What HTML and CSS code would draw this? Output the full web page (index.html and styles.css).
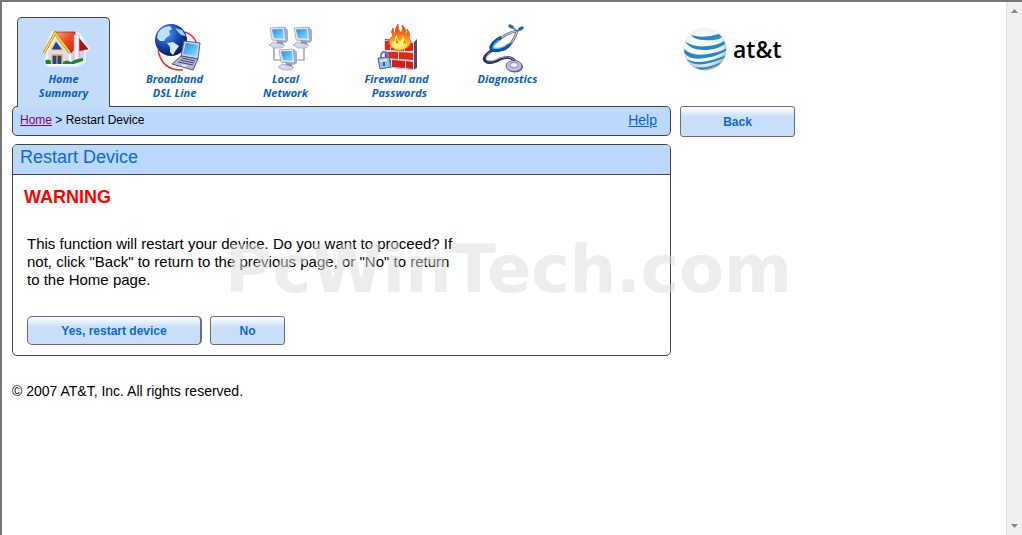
FILE: index.html
```html
<!DOCTYPE html>
<html lang="en">
<head>
    <meta charset="UTF-8">
    <meta name="viewport" content="width=device-width, initial-scale=1.0">
    <title>Restart Device</title>
    <link rel="stylesheet" href="styles.css">
</head>
<body>

<div class="page">
    <div class="layout">

        <!-- Main tabs -->
        <nav class="tabs">
            <a class="tab active" href="#">
                <svg class="icon" viewBox="-2 0 48 48" aria-hidden="true">
                    <defs>
                        <linearGradient id="roof" x1="0" y1="0" x2="1" y2="1">
                            <stop offset="0" stop-color="#f9a58c"/>
                            <stop offset="0.5" stop-color="#ee4a22"/>
                            <stop offset="1" stop-color="#d41c08"/>
                        </linearGradient>
                    </defs>
                    <path d="M10 8 L17 8 L32 10 L36 9 L39 12 L47 25 L43 28 V38 L35 42 H6 L3 38 L5 30 L2 28 Z" fill="#fff" stroke="#e9eef6" stroke-width="2"/>
                    <path d="M27 22 L42 25 V36 L30 39 Z" fill="#d6d2ee"/>
                    <path d="M6 27 L15 12 L27 29 V39 H6 Z" fill="#dedaf3"/>
                    <path d="M36 13 L46 25 L36 27 Z" fill="#b5120c" stroke="#711" stroke-width="0.6"/>
                    <path d="M13 8 H33 V24 L29 29 Z" fill="url(#roof)" stroke="#a41808" stroke-width="0.7"/>
                    <path d="M32 11 H37 V36 L32 38 Z" fill="#f3f1fc" stroke="#aaa5d0" stroke-width="0.7"/>
                    <path d="M2 29 L13 9 L28 29" fill="none" stroke="#a46b10" stroke-width="2.8"/>
                    <path d="M2 29 L13 9 L28 29" fill="none" stroke="#ffd83d" stroke-width="1.8"/>
                    <path d="M14 17 L21 26 H9 Z" fill="#2340a4" stroke="#ffd83d" stroke-width="1"/>
                    <path d="M10 40 V31 H20 V40" fill="#263f9c" stroke="#e8b620" stroke-width="1.3"/>
                    <path d="M15 31 V40" stroke="#e8b620" stroke-width="1.2"/>
                    <path d="M3 37 Q6 34 9 37 V40 H4 Z M21 38 Q25 35 29 38 Q33 35 41 34 L41 37 L32 40 H21 Z" fill="#178c2b"/>
                </svg>
                <span>Home<br>Summary</span>
            </a>
            <a class="tab" href="#">
                <svg class="icon" viewBox="-1 0 48 48" aria-hidden="true">
                    <defs>
                        <radialGradient id="earth" cx="0.35" cy="0.3" r="0.75">
                            <stop offset="0" stop-color="#4c9df2"/>
                            <stop offset="0.55" stop-color="#1745ae"/>
                            <stop offset="1" stop-color="#0a1560"/>
                        </radialGradient>
                        <linearGradient id="screen" x1="0" y1="0" x2="1" y2="1">
                            <stop offset="0" stop-color="#1c8fe8"/>
                            <stop offset="1" stop-color="#8fe0fb"/>
                        </linearGradient>
                    </defs>
                    <path d="M6 26 Q10 47 31 46 M33 8 Q42 11 45 20" fill="none" stroke="#f02b22" stroke-width="1.4"/>
                    <circle cx="19" cy="16" r="16" fill="url(#earth)"/>
                    <path d="M6 9 Q9 3 18 2 L20 5 L17 7 L18 11 L14 14 L12 17 L8 17 L5 14 Z" fill="#bfe2fb"/>
                    <path d="M15 19 L21 18 L27 22 L24 26 L21 31 L18 28 L18 23 Z" fill="#d3ecfd"/>
                    <path d="M23 4 L30 6 L34 12 L29 11 L26 8 Z" fill="#9fd0f6"/>
                    <path d="M32 17 L48 19 L46 35 L29 32 Z" fill="#c9cee8" stroke="#5a5f90" stroke-width="1"/>
                    <path d="M34 19 L46 21 L44 32 L31 30 Z" fill="url(#screen)"/>
                    <path d="M29 32 L46 35 L41 46 L20 40 Z" fill="#b3b7d6" stroke="#50547e" stroke-width="1"/>
                    <path d="M30 34 L43 37 M28 36 L42 39 M26 38 L41 41" stroke="#41466f" stroke-width="1"/>
                    <path d="M30 40 L35 41 L34 43 L29 42 Z" fill="#e4e6f4"/>
                </svg>
                <span>Broadband<br>DSL Line</span>
            </a>
            <a class="tab" href="#">
                <svg class="icon" viewBox="-2 0 48 48" aria-hidden="true">
                    <defs>
                        <g id="computer">
                            <path d="M2 1 L16 0 L19 3 V14 L16 16 L3 13 Z" fill="#a9adcb"/>
                            <path d="M1 1 L15 0 L17 14 L3 13 Z" fill="#e1e4f2" stroke="#8b90b0" stroke-width="0.6"/>
                            <path d="M3 2.500 L13.500 2 L15 12 L5 11 Z" fill="url(#screen)"/>
                            <path d="M8 14 L14 15 L14 18 L7 17 Z" fill="#8b8fae"/>
                            <path d="M0 18 L4 15 L16 18 L13 21 L5 21 Z" fill="#d5d8e8" stroke="#9296b1" stroke-width="0.6"/>
                        </g>
                    </defs>
                    <path d="M10 22 V36 H18 M40 22 V36 H32" fill="none" stroke="#8c8c8c" stroke-width="1.2"/>
                    <use href="#computer" x="5" y="3"/>
                    <use href="#computer" x="29" y="3"/>
                    <use href="#computer" x="14" y="25"/>
                </svg>
                <span>Local<br>Network</span>
            </a>
            <a class="tab" href="#">
                <svg class="icon" viewBox="0 0 48 48" aria-hidden="true">
                    <defs>
                        <linearGradient id="fire" x1="0" y1="0" x2="0" y2="1">
                            <stop offset="0" stop-color="#d92c12"/>
                            <stop offset="0.5" stop-color="#fb8a1b"/>
                            <stop offset="1" stop-color="#fff04a"/>
                        </linearGradient>
                    </defs>
                    <path d="M12 15 L41 18 L44 15 V44 L40 46 L12 43 Z" fill="#4f4c6c"/>
                    <path d="M11 16 L41 18 V46 L11 43 Z" fill="#d9d6e2"/>
                    <path d="M12 17 H17 V26 H12 Z M18 18 L31 20 V27 L18 26 Z M32 19 L40 19 V27 L32 27 Z" fill="#dd2a1c"/>
                    <path d="M12 28 L25 28 V35 L12 34 Z M26 28 L40 29 V36 L26 35 Z" fill="#dd2a1c"/>
                    <path d="M12 36 L18 36 V43 L12 42 Z M19 36 L32 37 V44 L19 43 Z M33 37 L40 38 V45 L33 44 Z" fill="#cc2217"/>
                    <path d="M18 23 Q13 16 20 12 Q17 8 20 4 Q20 9 23 10 Q21 5 25 0 Q24 5 28 9 Q31 5 29 1 Q34 5 32 11 Q35 9 34 5 Q38 9 36 14 Q40 19 35 23 Q26 30 18 23 Z" fill="url(#fire)" stroke="#e24b18" stroke-width="0.8"/>
                    <path d="M19 22 Q18 18 22 17 Q21 13 24 11 Q24 16 27 17 Q30 15 29 11 Q33 16 34 20 Q28 27 19 22 Z" fill="#fff36b"/>
                    <path d="M23 19 Q22 16 24 14 Q24 17 26 19 Z M30 19 Q32 17 31 15 Q33 17 33 20 Z" fill="#f77a1c"/>
                    <path d="M8 35 V32 Q8 28 11 28 Q15 28 15 32 V35" fill="none" stroke="#5d87bd" stroke-width="2"/>
                    <path d="M5 34 L16 33 L18 43 L7 45 Z" fill="#8dbfea" stroke="#376ba9" stroke-width="1"/>
                    <path d="M7 36 L14 35 L14 37 L7 38 Z" fill="#d9efff"/>
                    <path d="M11 38 V42" stroke="#224c86" stroke-width="1.6"/>
                </svg>
                <span>Firewall and<br>&nbsp; Passwords</span>
            </a>
            <a class="tab" href="#">
                <svg class="icon" viewBox="5 0 48 48" aria-hidden="true">
                    <g fill="none" stroke-linecap="round">
                        <path d="M38 7 Q30 8 22 14 Q13 21 12 24 M38 7 Q37 12 33 18 Q28 25 24 26" stroke="#66668c" stroke-width="2.600"/>
                        <path d="M38 7 Q30 8 22 14 M38 7 Q37 12 33 18" stroke="#c8c8dd" stroke-width="1.2"/>
                        <path d="M21 14 Q9 22 13 26 Q21 28 30 21" stroke="#0b4fae" stroke-width="3.400"/>
                        <path d="M20 16 Q12 22 15 24 Q21 26 29 20" stroke="#51aef0" stroke-width="1.3"/>
                        <path d="M12 27 Q1 35 8 38 Q13 40 21 35 Q33 31 36 38" stroke="#33335c" stroke-width="3"/>
                        <path d="M11 28 Q4 35 9 37 Q14 38 21 34 Q31 31 35 36" stroke="#9c9cc4" stroke-width="1"/>
                        <path d="M33 3 L38 7 L42 5" stroke="#66668c" stroke-width="1.6"/>
                        <path d="M31 2 L33 3 M41 5 L43 4" stroke="#1268c8" stroke-width="3.200"/>
                    </g>
                    <ellipse cx="36" cy="43" rx="8" ry="5.500" fill="#63638c"/>
                    <ellipse cx="35" cy="42" rx="8" ry="5.500" fill="#bdbddb" stroke="#50507c" stroke-width="0.8"/>
                    <ellipse cx="35" cy="41" rx="4" ry="2.500" fill="#eeeefa" stroke="#8080a8" stroke-width="0.8"/>
                </svg>
                <span>Diagnostics</span>
            </a>
        </nav>

        <div class="logo">
            <svg class="globe" viewBox="0 0 44 44" aria-hidden="true">
                <defs>
                    <radialGradient id="ball" cx="0.45" cy="0.4" r="0.6">
                        <stop offset="0" stop-color="#fff"/>
                        <stop offset="0.75" stop-color="#f1f1f1"/>
                        <stop offset="1" stop-color="#a9adb0"/>
                    </radialGradient>
                    <clipPath id="ballClip"><circle cx="22" cy="22" r="21"/></clipPath>
                </defs>
                <circle cx="22" cy="22" r="21.500" fill="url(#ball)"/>
                <g clip-path="url(#ballClip)" fill="#2489c5">
                    <path d="M8 8 Q20 12 36 7 L39 10 Q34 14 22 13 Q11 13 8 8 Z"/>
                    <path d="M2 14 Q10 21 25 19 Q36 18 41 14 L42 17 Q36 22 24 23 Q7 24 2 14 Z"/>
                    <path d="M0 21 Q9 30 25 27 Q37 25 44 21 L44 23 Q36 29 22 31 Q5 34 0 24 Z"/>
                    <path d="M2 31 Q10 37 25 34 Q37 31 43 28 L42 30 Q34 35 22 37 Q8 39 2 31 Z"/>
                    <path d="M8 39 Q18 42 28 39 Q35 37 39 35 L36 38 Q27 42 18 43 Z"/>
                </g>
            </svg>
            <span>at&amp;t</span>
        </div>

        <!-- Breadcrumb -->
        <div class="bar">
            <div><a class="visited" href="#">Home</a> &gt; Restart Device</div>
            <a class="help" href="#">Help</a>
        </div>
        <button type="button" class="back">Back</button>

        <!-- Content -->
        <main class="panel">
            <h1>Restart Device</h1>
            <div class="panel-body">
                <h2>WARNING</h2>
                <p>This function will restart your device. Do you want to proceed? If not, click "Back" to return to the previous page, or "No" to return to the Home page.</p>
                <div class="actions">
                    <button type="button" class="yes">Yes, restart device</button>
                    <button type="button" class="no">No</button>
                </div>
            </div>
        </main>
    </div>

    <footer>© 2007 AT&amp;T, Inc. All rights reserved.</footer>

    <div class="watermark">PcWinTech.com</div>
</div>

<!-- Scrollbar -->
<div class="scrollbar">
    <svg viewBox="0 0 7 4" aria-hidden="true"><path d="M0 4 L3.500 0 L7 4 Z" fill="#858585"/></svg>
    <svg viewBox="0 0 7 4" aria-hidden="true"><path d="M0 0 L3.500 4 L7 0 Z" fill="#858585"/></svg>
</div>

</body>
</html>
```

FILE: styles.css
```css
* {
    box-sizing: border-box;
}

body {
    margin: 0;
    display: flex;
    min-height: 100vh;
    border-top: 2px solid #777;
    border-left: 2px solid #777;
    background-color: #fff;
    color: #000;
    font-family: "Liberation Sans", Arial, sans-serif;
}

.page {
    position: relative;
    flex: 1;
    padding: 15px 10px;
}

.layout {
    display: grid;
    grid-template-columns: minmax(0, 659px) 115px;
    column-gap: 9px;
}

/* tabs */
.tabs {
    display: flex;
    gap: 18px;
    padding-left: 5px;
}

.tab {
    width: 93px;
    height: 90px;
    padding-top: 6px;
    border: 1px solid transparent;
    border-bottom: none;
    text-align: center;
    text-decoration: none;
    white-space: nowrap;
    color: #0860c0;
    font-family: "Open Sans", "Noto Sans", sans-serif;
    font-size: 11px;
    font-weight: bold;
    font-style: italic;
    line-height: 14px;
}

.tab.active {
    position: relative;
    border-color: #444;
    border-radius: 5px 5px 0 0;
    background-color: #c3dcfa;
}

.icon {
    display: block;
    width: 48px;
    height: 48px;
    margin: 0 auto;
    overflow: visible;
}

.logo {
    display: flex;
    align-items: center;
    align-self: start;
    gap: 6px;
    padding: 10px 3px;
    font-family: "Open Sans", sans-serif;
    font-size: 23px;
    font-weight: 600;
    line-height: 44px;
}

.globe {
    width: 44px;
    height: 44px;
}

/* breadcrumb */
.bar {
    display: flex;
    justify-content: space-between;
    height: 30px;
    margin-top: -1px;
    padding: 0 13px 0 7px;
    border: 1px solid #444;
    border-radius: 5px;
    background: linear-gradient(#c3dcfa, #bbd9fc 6px);
    font-size: 12px;
    line-height: 26px;
}

.visited {
    color: #800080;
}

.help {
    color: #0a62cc;
    font-size: 14px;
}

button {
    height: 29px;
    padding: 0;
    border: 1px solid #666f7a;
    border-radius: 3px;
    background: linear-gradient(#fff, #c9dff9 10px);
    color: #0c6bd0;
    font-family: inherit;
    font-size: 12px;
    font-weight: bold;
    cursor: pointer;
}

.back {
    height: 31px;
    margin-top: -1px;
}

.yes {
    width: 175px;
    border-right-width: 2px;
    border-radius: 5px;
}

.no {
    width: 75px;
}

/* content */
.panel {
    margin-top: 7px;
    border: 1px solid #444;
    border-radius: 5px;
}

.panel h1 {
    margin: 0;
    padding: 0 7px 5px;
    border-bottom: 1px solid #444;
    border-radius: 4px 4px 0 0;
    background-color: #bbd9fc;
    color: #0c6bd0;
    font-size: 18px;
    font-weight: normal;
    line-height: 24px;
}

.panel-body {
    padding: 12px 14px 10px;
}

.panel h2 {
    margin: 0 -3px 28px;
    color: #f00;
    font-size: 18px;
    line-height: 20px;
}

.panel p {
    max-width: 436px;
    margin: 0 0 27px;
    font-size: 15px;
    line-height: 18px;
}

.actions {
    display: flex;
    gap: 8px;
}

footer {
    margin-top: 27px;
    font-size: 14px;
    line-height: 16px;
}

.watermark {
    position: absolute;
    top: 236px;
    left: 223px;
    color: rgba(219, 219, 219, 0.5);
    font-family: "DejaVu Sans", Verdana, sans-serif;
    font-size: 65px;
    font-weight: bold;
    line-height: 64px;
    pointer-events: none;
}

.scrollbar {
    display: flex;
    flex-direction: column;
    justify-content: space-between;
    align-items: center;
    width: 16px;
    padding: 7px 0;
    border-left: 1px solid #e3e3e3;
    background-color: #efefef;
}

.scrollbar svg {
    width: 7px;
    height: 4px;
}
```
